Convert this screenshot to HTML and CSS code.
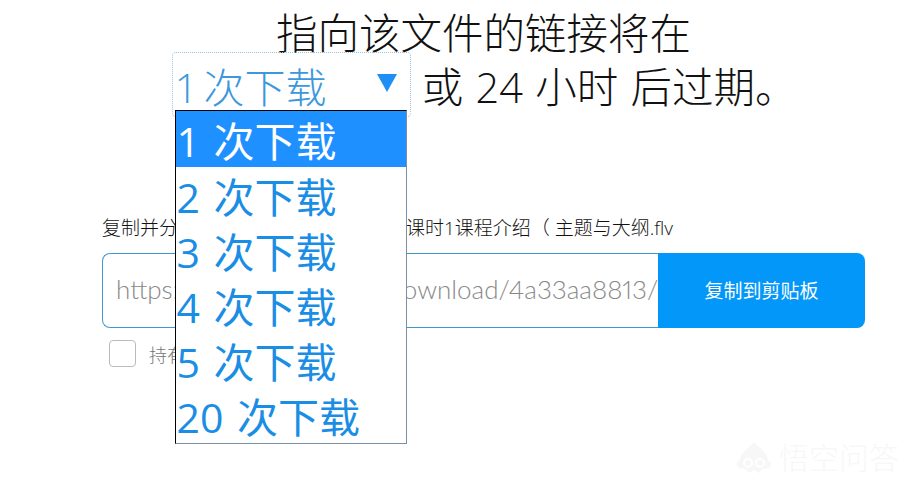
FILE: index.html
```html
<!DOCTYPE html>
<html lang="zh-CN">
<head>
  <meta charset="UTF-8">
  <title>发送文件</title>
  <link rel="stylesheet" href="styles.css">
</head>
<body>
  <main class="share">
    <h1 class="expire-title">
      指向该文件的链接将在<br>
      <span class="select">
        <span class="select-value">1 次下载</span>
        <span class="select-arrow"></span>
        <span class="select-menu">
          <span class="select-option selected">1 次下载</span>
          <span class="select-option">2 次下载</span>
          <span class="select-option">3 次下载</span>
          <span class="select-option">4 次下载</span>
          <span class="select-option">5 次下载</span>
          <span class="select-option">20 次下载</span>
        </span>
      </span>
      或 24 小时 后过期。
    </h1>

    <div class="share-label">复制并分享链接以发送您的此文件：课时1课程介绍（&nbsp;主题与大纲.flv</div>

    <div class="link-row">
      <div class="link-input">https://send.firefox.com/download/4a33aa8813/</div>
      <button class="copy-btn">复制到剪贴板</button>
    </div>

    <label class="password-row">
      <span class="checkbox"></span>
      <span class="password-text">持有密码</span>
    </label>
  </main>

  <div class="watermark">
    <svg class="watermark-logo" width="38" height="34" viewBox="0 0 38 34">
      <path d="M19 1C14 7 6 10 5 19C1 21 1 25 4 27L11 28L14 32L19 29L24 32L27 28L34 27C37 25 37 21 33 19C32 10 24 7 19 1Z" fill="#f7f7f7"/>
      <circle cx="13" cy="22" r="4" fill="none" stroke="#fff" stroke-width="2"/>
      <circle cx="25" cy="22" r="4" fill="none" stroke="#fff" stroke-width="2"/>
    </svg>
    <span>悟空问答</span>
  </div>
</body>
</html>
```

FILE: styles.css
```css
* {
  margin: 0;
  padding: 0;
  box-sizing: border-box;
}

:root {
  --blue: #0297f8;
  --blue-text: #1a8de4;
  --line: #3f97d3;
  --font: "Open Sans", "Noto Sans CJK SC", sans-serif;
}

html, body {
  height: 100%;
  overflow: hidden;
}

body {
  background: #fff;
  color: #111;
  font-family: var(--font);
  position: relative;
}

.share {
  width: 763px;
  margin-left: 102px;
  padding-top: 6px;
}

.expire-title {
  font-size: 41.5px;
  font-weight: 300;
  line-height: 54px;
  word-spacing: 1.5px;
  text-align: center;
  height: 209px;
}

.select {
  display: inline-block;
  position: relative;
  width: 239px;
  height: 65px;
  border: 1px dotted #9cc4d8;
  border-radius: 4px;
  font-size: 41px;
  word-spacing: 0;
  vertical-align: -14px;
  text-align: left;
  margin: -9px -1px 0 1px;
}

.select-value {
  position: absolute;
  left: 2px;
  top: 7px;
  color: #3d97dc;
  word-spacing: -5px;
  white-space: nowrap;
}

.select-arrow {
  position: absolute;
  left: 204px;
  top: 21px;
  border-left: 10px solid transparent;
  border-right: 10px solid transparent;
  border-top: 18px solid #1e90f5;
}

.select-menu {
  position: absolute;
  left: 2px;
  top: 57px;
  width: 232px;
  height: 334px;
  background: #fff;
  border: 1px solid #7a8fa8;
  border-top-color: #000;
  border-left-color: #000;
  z-index: 2;
}

.select-option {
  display: block;
  height: 55px;
  line-height: 60px;
  padding-left: 1px;
  color: var(--blue-text);
  font-weight: 400;
  word-spacing: 3px;
  white-space: nowrap;
}

.select-option.selected {
  height: 56px;
  background: #1e90ff;
  color: #fff;
}

.share-label {
  font-size: 19px;
  font-weight: 300;
  line-height: 26px;
  white-space: nowrap;
  margin-bottom: 12px;
}

.link-row {
  display: flex;
  height: 75px;
}

.link-input {
  width: 556px;
  border: 1px solid var(--line);
  border-right: none;
  border-radius: 8px 0 0 8px;
  padding-left: 13px;
  font-family: Lato, var(--font);
  font-size: 26px;
  font-variant-numeric: proportional-nums;
  font-weight: 300;
  line-height: 70px;
  color: #888;
  white-space: nowrap;
  overflow: hidden;
}

.copy-btn {
  width: 207px;
  padding-bottom: 2px;
  border: none;
  border-radius: 0 8px 8px 0;
  background: var(--blue);
  color: #fff;
  font-family: var(--font);
  font-size: 19px;
  font-weight: 400;
}

.password-row {
  display: flex;
  align-items: center;
  gap: 13px;
  margin: 12px 0 0 7px;
}

.checkbox {
  width: 27px;
  height: 27px;
  border: 1px solid #bbb;
  border-radius: 4px;
}

.password-text {
  font-size: 18px;
  font-weight: 300;
  color: #777;
}

.watermark {
  position: absolute;
  left: 735px;
  top: 439px;
  display: flex;
  align-items: center;
  gap: 6px;
  color: #f7f7f7;
  font-size: 30px;
  font-weight: 300;
  line-height: 38px;
  white-space: nowrap;
}
```
